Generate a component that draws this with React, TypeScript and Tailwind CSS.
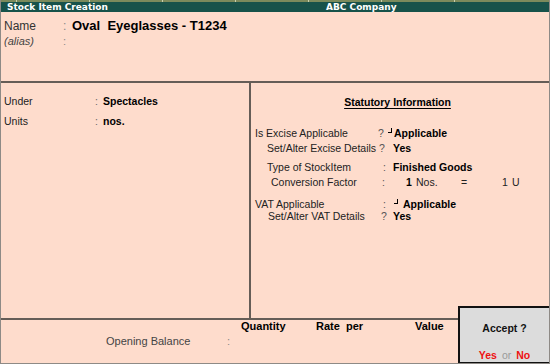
import React from "react";

const Mark = ({ className = "" }: { className?: string }) => (
  <span className={"inline-block w-[4px] h-[5px] border-r-[1.5px] border-b-[1.5px] border-black relative top-[-3px] " + className} />
);

function Row({
  indent,
  label,
  sepX,
  sep,
  children,
  className = "",
}: {
  indent: number;
  label: string;
  sepX: number;
  sep: string;
  children: React.ReactNode;
  className?: string;
}) {
  return (
    <div className={"flex items-center whitespace-nowrap " + className}>
      <span className="text-[#222] shrink-0" style={{ marginLeft: indent, width: sepX - 251 - indent }}>
        {label}
      </span>
      <span className="text-[#555] shrink-0" style={{ width: 393 - sepX }}>
        {sep}
      </span>
      <span className="flex items-center font-bold text-black">{children}</span>
    </div>
  );
}

export default function App() {
  return (
    <div className="w-[550px] h-[364px] relative overflow-hidden flex flex-col bg-[#fedccc] border-l border-r border-b border-[#8e8a86] font-['Liberation_Sans',Arial,sans-serif] text-black">
      {/* olive strip */}
      <div className="h-[2px] bg-[#7b8a5c] flex shrink-0">
        <div className="w-[15px]" />
        {[0, 1, 2, 3, 4, 5, 6].map((i) => (
          <div key={i} className="w-[73px] h-[2px] border-l border-[#c7cfae]" />
        ))}
      </div>
      {/* header */}
      <div className="h-[10px] bg-[#17524a] flex items-center text-white font-['DejaVu_Sans',Verdana,sans-serif] font-bold text-[9px] leading-none shrink-0">
        <span className="w-[325px] pl-[6px]">Stock Item Creation</span>
        <span>ABC Company</span>
      </div>
      {/* top section */}
      <div className="h-[69px] shrink-0 pl-[3px] pt-[6px]">
        <div className="flex items-center leading-[16px] whitespace-nowrap">
          <span className="w-[59px] text-[12px] text-[#333]">Name</span>
          <span className="w-[9px] text-[12px] text-[#888]">:</span>
          <span className="text-[13px] font-bold whitespace-pre">Oval  Eyeglasses - T1234</span>
        </div>
        <div className="flex items-center leading-[12px] mt-[1px]">
          <span className="w-[59px] text-[11px] italic text-[#444]">(alias)</span>
          <span className="w-[9px] text-[11px] text-[#888]">:</span>
        </div>
      </div>
      <div className="h-[2px] bg-[#655d57] shrink-0" />
      {/* middle */}
      <div className="h-[235px] shrink-0 flex text-[10.5px]">
        <div className="w-[248px] pl-[3px] pt-[11px]">
          <div className="flex items-center leading-[14px]">
            <span className="w-[91px] text-[#222]">Under</span>
            <span className="w-[8px] text-[#666]">:</span>
            <span className="font-bold">Spectacles</span>
          </div>
          <div className="flex items-center leading-[14px] mt-[6px]">
            <span className="w-[91px] text-[#222]">Units</span>
            <span className="w-[8px] text-[#666]">:</span>
            <span className="font-bold">nos.</span>
          </div>
        </div>
        <div className="w-[2px] bg-[#655d57]" />
        <div className="flex-1 pt-[12px]">
          <div className="leading-[14px] text-center font-bold underline underline-offset-2 pr-[5px] text-[10.5px]">
            Statutory Information
          </div>
          <Row indent={4} label="Is Excise Applicable" sepX={378} sep="?" className="leading-[14px] mt-[17px]">
            <Mark className="ml-[-5px] mr-[2px]" />
            <span>Applicable</span>
          </Row>
          <Row indent={16} label="Set/Alter Excise Details" sepX={379} sep="?" className="leading-[14px] mt-[1px]">
            Yes
          </Row>
          <Row indent={16} label="Type of StockItem" sepX={383} sep=":" className="leading-[14px] mt-[5px]">
            Finished Goods
          </Row>
          <div className="flex items-center whitespace-nowrap leading-[14px] mt-[1px]">
            <span className="text-[#222] ml-[20px] w-[111px]">Conversion Factor</span>
            <span className="text-[#555] w-[24px]">:</span>
            <span className="font-bold w-[10px]">1</span>
            <span className="text-[#222] w-[45px]">Nos.</span>
            <span className="text-[#222] w-[41px]">=</span>
            <span className="text-[#222] w-[10px]">1</span>
            <span className="text-[#222]">U</span>
          </div>
          <Row indent={4} label="VAT Applicable" sepX={383} sep=":" className="leading-[12px] mt-[9px]">
            <Mark className="ml-[1px] mr-[5px]" />
            <span>Applicable</span>
          </Row>
          <Row indent={17} label="Set/Alter VAT Details" sepX={381} sep="?" className="leading-[12px]">
            Yes
          </Row>
        </div>
      </div>
      <div className="h-[2px] bg-[#655d57] shrink-0" />
      {/* bottom */}
      <div className="flex-1 text-[11px]">
        <div className="flex leading-[13px] font-bold whitespace-nowrap">
          <span className="ml-[240px] w-[75px]">Quantity</span>
          <span className="w-[99px] whitespace-pre">Rate  per</span>
          <span>Value</span>
        </div>
        <div className="flex leading-[13px] mt-[2px] whitespace-nowrap text-[#444]">
          <span className="ml-[105px] w-[121px]">Opening Balance</span>
          <span className="text-[#888]">:</span>
        </div>
      </div>
      {/* Accept box */}
      <div className="absolute left-[457px] top-[306px] w-[93px] h-[58px] border-2 border-[#111] bg-[#dcdcdc] flex flex-col items-center text-[10.5px] font-bold">
        <div className="leading-[14px] mt-[13px] text-[#111]">Accept ?</div>
        <div className="leading-[14px] mt-[13px] flex items-center whitespace-nowrap">
          <span className="text-[#ee1111]">Yes</span>
          <span className="text-[#9a9a9a] font-normal mx-[5px]">or</span>
          <span className="text-[#ee1111]">No</span>
        </div>
      </div>
    </div>
  );
}
